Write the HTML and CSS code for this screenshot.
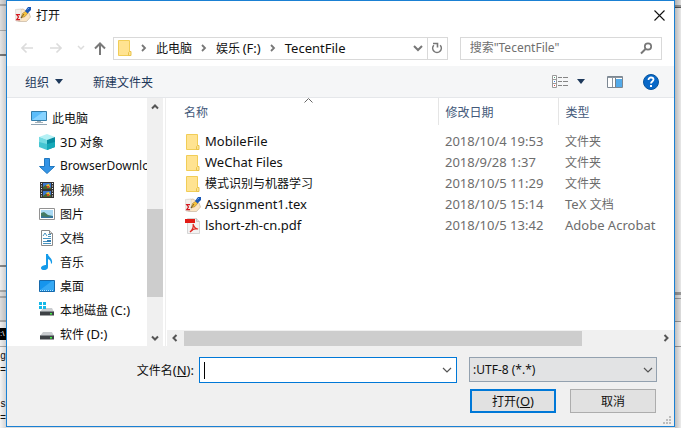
FILE: index.html
```html
<!DOCTYPE html>
<html lang="zh-CN">
<head>
<meta charset="utf-8">
<title>打开</title>
<link rel="stylesheet" href="styles.css">
</head>
<body>
<svg class="defs" aria-hidden="true">
  <symbol id="folder" viewBox="0 0 14 16"><path d="M.5.5h11v15H.5z" fill="#ffe391" stroke="#f1cd57"/><path d="M11.500 11.500h1.500v4h-2.500v-3z" fill="#ffe391" stroke="#e9c34c"/></symbol>
  <symbol id="tex" viewBox="0 0 16 16"><path d="M2 3l6-1 6 4 1.500 4-4 4.500H4l-3-1z" fill="#fbe5c4" stroke="#c4b5a0" stroke-width=".7"/><path d="M.5 2.500L6 2v11l-5 1z" fill="#f3f0ec" stroke="#d5cfc8" stroke-width=".6"/><path d="M5 7.700H1.700l1.800 2.300-1.800 2.700H5" fill="none" stroke="#d51920" stroke-width="1.200"/><path d="M6 11l1.500-4.500L11 4l2 2-3 3.500z" fill="#f8c23a" stroke="#8b6a2e" stroke-width=".5"/><path d="M10 4l3-4h3v3l-3.500 3.500z" fill="#1757b7"/><path d="M12.500 2.500L14 1" stroke="#6ea7ed"/><path d="M6 11l3-4" stroke="#463824" stroke-width=".7"/></symbol>
  <symbol id="chev" viewBox="0 0 8 8"><path d="M2 1l3 3-3 3" fill="none" stroke="currentColor" stroke-width="1.800"/></symbol>
  <symbol id="down" viewBox="0 0 10 8"><path d="M1 2l4 4 4-4" fill="none" stroke="currentColor" stroke-width="1.200"/></symbol>
  <symbol id="drive" viewBox="0 0 16 16"><path d="M4 6h9l2 4H1z" fill="#c9cccf"/><path d="M1 9.500h14v4H1z" fill="#3e4246"/><path d="M1 9h14v1H1z" fill="#858a8e"/><path d="M11 11h2v1.500h-2z" fill="#42eb45"/></symbol>
</svg>
<div class="screen">
  <div class="behind left" aria-hidden="true"><span class="console">:\</span><span class="code">g</span><span class="code">=</span><span class="code gap">s</span><span class="code">=</span></div>
  <main class="dialog">
    <header class="title">
      <svg width="16" height="16"><use href="#tex"/></svg><h1>打开</h1>
      <button class="close" aria-label="关闭"><svg width="11" height="11"><path d="M.5.5l10 10M10.500.5l-10 10" stroke="#111" stroke-width="1.100"/></svg></button>
    </header>
    <nav class="nav">
      <button class="arrow back" aria-label="后退"><svg width="14" height="12"><path d="M13 6H2M6.500 1.500L2 6l4.500 4.500" fill="none" stroke="#dcdcdc" stroke-width="1.700"/></svg></button>
      <button class="arrow fwd" aria-label="前进"><svg width="14" height="12"><path d="M1 6h11M7.500 1.500L12 6l-4.500 4.500" fill="none" stroke="#dcdcdc" stroke-width="1.700"/></svg></button>
      <button class="arrow recent" aria-label="最近"><svg width="8" height="6"><path d="M1 1l3 3 3-3" fill="none" stroke="#dcdcdc" stroke-width="1.500"/></svg></button>
      <button class="arrow up" aria-label="向上"><svg width="12" height="13"><path d="M6 13V2M1 6.500l5-5 5 5" fill="none" stroke="#797979" stroke-width="2"/></svg></button>
      <div class="address">
        <svg class="afolder" width="14" height="16"><use href="#folder"/></svg>
        <svg class="sep" width="8" height="8"><use href="#chev"/></svg><a href="#pc">此电脑</a>
        <svg class="sep" width="8" height="8"><use href="#chev"/></svg><a href="#f">娱乐 <span class="la">(F:)</span></a>
        <svg class="sep" width="8" height="8"><use href="#chev"/></svg><a href="#t" class="la">TecentFile</a>
        <button class="drop" aria-label="历史"><svg width="10" height="8"><path d="M1 2l4 4 4-4" fill="none" stroke="#777" stroke-width="2"/></svg></button>
        <button class="refresh" aria-label="刷新"><svg width="12" height="12"><path d="M9.200 3.300a4.300 4.300 0 1 1-6.400 0" fill="none" stroke="#777" stroke-width="1.600"/><path d="M2 1.500h4.500V5.500" fill="none" stroke="#777" stroke-width="1.600"/></svg></button>
      </div>
      <label class="search"><input type="text" placeholder='搜索"TecentFile"' aria-label="搜索"><svg width="13" height="13"><circle cx="8" cy="4.500" r="3.200" fill="none" stroke="#777" stroke-width="1.700"/><path d="M5.500 7L1 11.500" stroke="#777" stroke-width="2"/></svg></label>
    </nav>
    <div class="tools">
      <button>组织<svg width="8" height="5"><path d="M0 0h8L4 5z" fill="#1e395b"/></svg></button>
      <button class="new">新建文件夹</button>
      <button class="view" aria-label="视图"><svg width="17" height="13"><path d="M.5.5h4v12h-4zM.5 4.500h4M.5 8.500h4" fill="#fff" stroke="#999"/><path d="M2 2h1v1H2z" fill="#4c9a75"/><path d="M2 6h1v1H2z" fill="#3b8bef"/><path d="M2 10h1v1H2z" fill="#e34141"/><path d="M6 2.500h4m1 0h5M6 6.500h4m1 0h5M6 10.500h4m1 0h5" stroke="#858585"/></svg></button>
      <button class="more" aria-label="更多选项"><svg width="8" height="5"><path d="M0 0h8L4 5z" fill="#1e395b"/></svg></button>
      <button class="pane" aria-label="预览窗格"><svg width="16" height="12"><path d="M.5.5h15v11H.5z" fill="#fff" stroke="#7c8792"/><path d="M1 1.500h14M5.500 2v9" stroke="#8b959e"/><path d="M9 3h6v8H9z" fill="#53aae9"/><path d="M8.500 2v9" stroke="#75808b"/></svg></button>
      <button class="help" aria-label="帮助"><svg width="16" height="16"><circle cx="8" cy="8" r="7.500" fill="#0868c8" stroke="#07549c"/><path d="M5.500 6c0-3.500 5-3 5-.4 0 1.900-2.500 2-2.500 4" fill="none" stroke="#fff" stroke-width="1.800"/><path d="M7 11h2v2H7z" fill="#fff"/></svg></button>
    </div>
    <div class="content">
      <aside class="side">
        <ul class="tree">
          <li class="root"><svg width="16" height="16" viewBox="0 0 16 16"><path d="M.5 1.500h15v9H.5z" fill="#5bbdfa" stroke="#347da9"/><path d="M1 10L12 2h3v8z" fill="#87d3ff"/><path d="M6 11h4v1h2v1H4v-1h2z" fill="#a3b1ba"/><path d="M0 14.500h16" stroke="#91a5b4"/></svg>此电脑</li>
          <li><svg width="16" height="16" viewBox="0 0 16 16"><path d="M0 3l8 3v10l-8-3z" fill="#45c5d2"/><path d="M0 3l8-3 8 3-8 3z" fill="#b5f1f5"/><path d="M16 3L8 6v10l8-3z" fill="#078ca0"/><path d="M0 3l8 3v4L0 8z" fill="#75dce3"/><path d="M8 10l8-2v5l-8 3z" fill="#16a9b8"/></svg><span class="la">3D</span>&nbsp;对象</li>
          <li class="long"><svg width="16" height="16" viewBox="0 0 16 16"><path d="M5.500.5h5v8h5L8 15.500.5 8.500h5z" fill="#3494e6" stroke="#2078c0"/></svg>BrowserDownlo</li>
          <li><svg width="16" height="16" viewBox="0 0 16 16"><path d="M1 0h14v16H1z" fill="#343434"/><path d="M4 1h8v6H4zm0 8h8v6H4z" fill="#3c78ce"/><path d="M4 5l3-2 5 3v1H4zm0 9l4-3 4 2v2H4z" fill="#496530"/><path d="M7 3l3-1 1 3-2 1zm0 8l3-1 1 3-2 1z" fill="#f1c326"/><path d="M8 4h2v2H8zm0 8h2v2H8z" fill="#d64825"/><path d="M2.500 1v14M13.500 1v14" stroke="#eee" stroke-dasharray="1 1.500"/></svg>视频</li>
          <li><svg width="16" height="16" viewBox="0 0 16 16"><path d="M.5 2.500h15v11H.5z" fill="#fff" stroke="#929292"/><path d="M2 4h12v8H2z" fill="#a9d9f4"/><path d="M2 7l3-1 4 3 5 1v2H2z" fill="#447b65"/><path d="M2 10l6 1 6-1v2H2z" fill="#3474a0"/></svg>图片</li>
          <li><svg width="16" height="16" viewBox="0 0 16 16"><path d="M2.500.5h8l3 3v12h-11z" fill="#fff" stroke="#8a8a8a"/><path d="M10.500.5v3h3" fill="#ddd" stroke="#8a8a8a"/><path d="M4 6l2-3 2 3M9 4.500h3M9 6.500h3M4 8.500h8M4 11.500h4M4 13.500h8" fill="none" stroke="#4793bf"/><path d="M8 10h4v2H8z" fill="#327db3"/></svg>文档</li>
          <li><svg width="16" height="16" viewBox="0 0 16 16"><path d="M7 0h2c0 3 5 4 4 9l-1 1c0-3-1-4-3-5v8c0 4-7 4-7 1 0-2 3-3 5-3z" fill="#159bea"/></svg>音乐</li>
          <li><svg width="16" height="16" viewBox="0 0 16 16"><path d="M.5 2.500h15v11H.5z" fill="#1595ed" stroke="#1769ab"/><path d="M1 12L13 3h2v9z" fill="#35a9f5"/><path d="M1 12.500h14" stroke="#b6e2fb" stroke-dasharray="1 1"/></svg>桌面</li>
          <li><svg width="16" height="16" viewBox="0 0 16 16"><use href="#drive"/><path d="M0 0h3v3H0zm4 0h3v3H4zM0 4h3v3H0zm4 0h3v3H4z" fill="#13b8e8"/></svg>本地磁盘&nbsp;<span class="la">(C:)</span></li>
          <li><svg width="16" height="16"><use href="#drive"/></svg>软件&nbsp;<span class="la">(D:)</span></li>
        </ul>
        <div class="vbar" aria-hidden="true"><svg width="8" height="7"><path d="M1 5.500l3-3 3 3" fill="none" stroke="#555" stroke-width="2"/></svg><i class="vthumb"></i><svg width="8" height="7"><path d="M1 1.500l3 3 3-3" fill="none" stroke="#555" stroke-width="2"/></svg></div>
      </aside>
      <section class="files">
        <svg class="sort" width="9" height="5" aria-hidden="true"><path d="M.5 4.500l4-4 4 4" fill="none" stroke="#666"/></svg>
        <table>
          <colgroup><col class="cname"><col class="cdate"><col></colgroup>
          <thead><tr><th>名称</th><th>修改日期</th><th>类型</th></tr></thead>
          <tbody>
            <tr><td class="la"><svg width="16" height="16" viewBox="0 0 16 16"><use href="#folder" width="14" height="16" x="1"/></svg>MobileFile</td><td>2018/10/4 19:53</td><td class="cj">文件夹</td></tr>
            <tr><td class="la"><svg width="16" height="16" viewBox="0 0 16 16"><use href="#folder" width="14" height="16" x="1"/></svg>WeChat Files</td><td>2018/9/28 1:37</td><td class="cj">文件夹</td></tr>
            <tr><td class="cj"><svg width="16" height="16" viewBox="0 0 16 16"><use href="#folder" width="14" height="16" x="1"/></svg>模式识别与机器学习</td><td>2018/10/5 11:29</td><td class="cj">文件夹</td></tr>
            <tr><td><svg width="16" height="16"><use href="#tex"/></svg>Assignment1.tex</td><td>2018/10/5 15:14</td><td>TeX <span class="cj">文档</span></td></tr>
            <tr><td><svg width="16" height="16" viewBox="0 0 16 16"><path d="M2.500.5h9l3 3v12h-12z" fill="#f2f2f2" stroke="#d5d5d5"/><path d="M11.500.5v3h3" fill="#ddd" stroke="#c5c5c5"/><path d="M0 1h10v4H0z" fill="#e21b16"/><path d="M8 6c1 3 2 5 5 5-3-1-6 1-8 3 2-2 4-5 3-8z" fill="none" stroke="#e02822" stroke-width="1.200"/></svg>lshort-zh-cn.pdf</td><td>2018/10/5 13:42</td><td>Adobe Acrobat</td></tr>
          </tbody>
        </table>
        <div class="hbar" aria-hidden="true"><svg width="8" height="8"><path d="M5.500 1l-3 3 3 3" fill="none" stroke="#555" stroke-width="2"/></svg><i class="hthumb"></i><svg width="8" height="8"><path d="M2.500 1l3 3-3 3" fill="none" stroke="#555" stroke-width="2"/></svg></div>
      </section>
    </div>
    <footer class="foot">
      <label class="fname" for="name">文件名<span class="la">(<u>N</u>):</span></label>
      <div class="combo"><i class="caret"></i><input id="name" type="text"><svg width="10" height="8"><use href="#down"/></svg></div>
      <div class="pick"><select aria-label="文件类型"><option>:UTF-8 (*.*)</option></select><svg width="10" height="8"><use href="#down"/></svg></div>
      <div class="actions"><button class="ok">打开<span class="la">(<u>O</u>)</span></button><button>取消</button></div>
      <svg class="grip" width="8" height="8" aria-hidden="true"><path d="M6 0h2v2H6zM3 3h2v2H3zm3 0h2v2H6zM0 6h2v2H0zm3 0h2v2H3zm3 0h2v2H6z" fill="#bdbdbd"/></svg>
    </footer>
  </main>
  <div class="behind right" aria-hidden="true"></div>
</div>
</body>
</html>
```
FILE: styles.css
```css
* { box-sizing: border-box; }
body { margin: 0; font: 12px/20px "Noto Sans CJK SC", sans-serif; color: #111; background: #ddd; }
.defs { position: absolute; width: 0; height: 0; }
svg { flex: none; }
button, input, select { font: inherit; color: inherit; margin: 0; border-radius: 0; }
button { border: 0; background: none; padding: 0; }
h1 { font: inherit; margin: 0; }
.la { font-family: "Noto Sans", "Noto Sans CJK SC", sans-serif; font-size: 13px; }
.cj { font-family: "Noto Sans CJK SC", sans-serif; font-size: 12px; }

.screen { display: grid; grid-template-columns: 6px minmax(0, 1fr) 6px; min-height: 100vh; }
.behind { overflow: hidden; }
.left {
  display: flex; flex-direction: column; padding-top: 328px;
  background:
    linear-gradient(90deg, transparent, #0002),
    linear-gradient(#d8d8d8 0 4px, #aaa 4px 6px, #ddd 6px 30px, #aaa 30px 31px, #e4e4e4 31px 54px, #777 54px 56px, #eee 56px 265px, #888 265px 267px, #eee 267px 290px, #aaa 290px 292px, #ddd 292px 296px, #aaa 296px 298px, #ddd 298px 320px, #aaa 320px 322px, #eee 322px 346px, #aaa 346px 347px, #f4f4f4 347px);
}
.right {
  background:
    linear-gradient(90deg, #0003, transparent),
    linear-gradient(#ddd 0 5px, #999 5px 7px, #555 7px 8px, #e8e8e8 8px 292px, #999 292px 295px, #ddd 295px 298px, #999 298px 299px, #ddd 299px 321px, #999 321px 322px, #eee 322px 346px, #999 346px 347px, #ececec 347px);
}
.console { background: #000; color: #fff; font: 8px/12px "Liberation Sans", sans-serif; margin-bottom: 10px; }
.code { font: 10px/14px "Liberation Mono", monospace; color: #111; }
.gap { margin-top: 20px; }

.dialog { display: flex; flex-direction: column; min-width: 0; background: #fff; border: 1px solid #1a80d3; margin-bottom: 1px; }
.title { display: flex; align-items: center; height: 28px; margin-bottom: 1px; padding: 0 9px 0 8px; gap: 5px; }
.title svg { display: block; }
.close { margin-left: auto; }

.nav { display: flex; align-items: center; height: 36px; padding: 0 12px 0 13px; }
.arrow { display: flex; flex: none; }
.fwd { margin-left: 15px; }
.recent { margin-left: 14px; }
.up { margin-left: 9px; }
.address { flex: 328 1 0; min-width: 0; display: flex; align-items: center; height: 23px; border: 1px solid #d9d9d9; margin-left: 7px; padding-left: 4px; }
.address a { color: inherit; text-decoration: none; white-space: nowrap; }
.sep { color: #777; margin: 0 8px; }
.drop { margin-left: auto; display: flex; padding-right: 4px; }
.refresh { display: flex; align-items: center; justify-content: center; align-self: stretch; width: 20px; border-left: 1px solid #d9d9d9; }
.search { flex: 183 1 0; min-width: 0; display: flex; align-items: center; height: 23px; border: 1px solid #d9d9d9; margin-left: 12px; padding: 0 8px 0 9px; }
.search input { flex: 1; min-width: 0; border: 0; outline: 0; padding: 0; font-family: "Noto Sans", "Noto Sans CJK SC", sans-serif; }
.search input::placeholder { color: #707070; opacity: 1; }

.tools { display: flex; align-items: center; height: 32px; padding: 0 15px 0 18px; background: #f5f6f7; border-bottom: 1px solid #e5e7ea; color: #1e395b; }
.tools button { display: flex; align-items: center; gap: 6px; }
.tools .new { margin-left: 30px; }
.tools .view { margin-left: auto; }
.tools .more { margin-left: 8px; }
.tools .pane { margin-left: 22px; }
.tools .help { margin-left: 20px; }

.content { flex: 1; display: flex; min-height: 0; }
.side { display: flex; width: 159px; flex: none; border-right: 1px solid #eee; }
.tree { flex: 1; min-width: 0; margin: 0; padding: 8px 0 0; list-style: none; overflow: hidden; }
.tree li { display: flex; align-items: center; height: 24px; padding-left: 32px; white-space: nowrap; }
.tree li svg { margin-right: 5px; }
.tree .root { padding-left: 24px; }
.long { font-family: "Noto Sans", sans-serif; }
.vbar { width: 16px; margin-right: 2px; background: #f0f0f0; display: flex; flex-direction: column; align-items: center; padding: 5px 0 4px; }
.vthumb { width: 100%; height: 88px; background: #cdcdcd; margin: auto 0 38px; }

.files { position: relative; flex: 1; min-width: 0; display: flex; flex-direction: column; }
.sort { position: absolute; left: 138px; top: 0; }
table { width: 100%; table-layout: fixed; border-collapse: collapse; }
.cname { width: 272px; }
.cdate { width: 120px; }
th { height: 27px; padding: 0 0 0 7px; text-align: left; font-weight: 400; color: #43597a; border-right: 1px solid #e5e5e5; }
th:first-child { padding-left: 18px; }
th:last-child { border-right: 0; }
tbody::before { content: ""; display: block; height: 5px; }
td { height: 21px; padding: 0 0 0 7px; color: #6d6d6d; white-space: nowrap; overflow: hidden; line-height: 20px; }
td:not(.cj) { font-family: "Noto Sans", "Noto Sans CJK SC", sans-serif; font-size: 13px; }
td:first-child { padding-left: 19px; color: #111; }
td svg { vertical-align: middle; margin-right: 4px; }
.hbar { display: flex; align-items: center; height: 16px; margin: auto 0 0 1px; padding: 0 4px; background: #f0f0f0; }
.hthumb { width: 398px; height: 15px; background: #cdcdcd; margin: 0 auto 0 5px; }

.foot { position: relative; display: grid; grid-template-columns: 187px minmax(0, 251fr) minmax(0, 188fr); column-gap: 12px; row-gap: 6px; padding: 11px 17px 13px 0; background: #f0f0f0; }
.fname { text-align: right; line-height: 26px; white-space: nowrap; }
.combo { display: flex; align-items: center; height: 26px; margin-left: -7px; background: #fff; border: 1px solid #0078d7; padding: 0 4px; color: #555; }
.combo input { flex: 1; min-width: 0; border: 0; outline: 0; padding: 0; }
.caret { width: 1px; height: 17px; background: #000; }
.pick { position: relative; height: 25px; }
.pick select { width: 100%; height: 100%; appearance: none; border: 1px solid #93a1af; background: #e2e3e4; padding: 0 20px 0 3px; font: 12px "Noto Sans", sans-serif; color: #111; }
.pick svg { position: absolute; right: 4px; top: 9px; color: #555; pointer-events: none; }
.actions { grid-column: 3; display: grid; grid-template-columns: 1fr 1fr; gap: 14px; margin: 0 1px; }
.actions button { height: 24px; line-height: 20px; background: #e1e1e1; border: 1px solid #adadad; }
.actions .ok { border: 2px solid #0078d7; }
.grip { position: absolute; right: 3px; bottom: 2px; }
```
